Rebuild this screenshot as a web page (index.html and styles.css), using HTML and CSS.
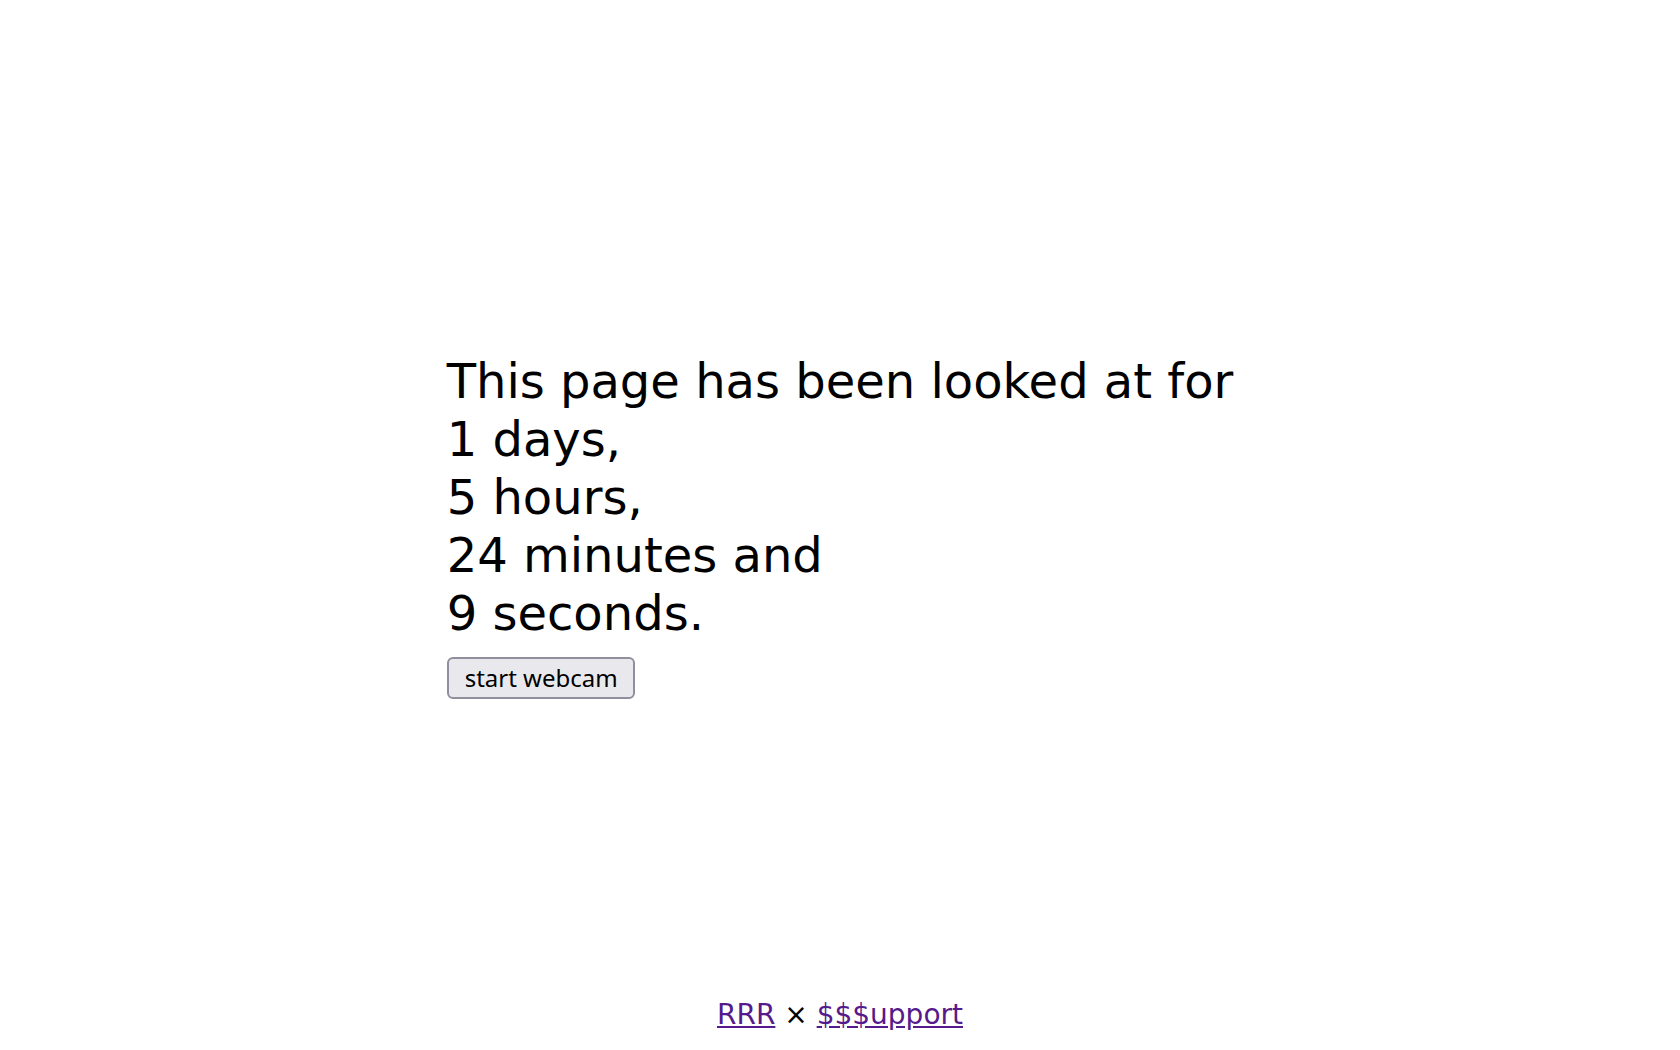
FILE: index.html
```html
<!DOCTYPE html>
<html lang="en">
<head>
<meta charset="utf-8">
<title>Looked at</title>
<link rel="stylesheet" href="styles.css">
</head>
<body>
<div class="page">
  <main class="main">
    <div class="counter">
      <div class="line">This page has been looked at for</div>
      <div class="line">1 days,</div>
      <div class="line">5 hours,</div>
      <div class="line">24 minutes and</div>
      <div class="line">9 seconds.</div>
    </div>
    <button class="cam-btn" type="button">start webcam</button>
  </main>
  <footer class="footer">
    <a href="#r" class="link">RRR</a> × <a href="#s" class="link">$$$upport</a>
  </footer>
</div>
</body>
</html>
```

FILE: styles.css
```css
html, body {
  margin: 0;
  padding: 0;
  background: #ffffff;
}
body {
  font-family: "DejaVu Sans", sans-serif;
  color: #000;
}
.page {
  height: 100vh;
  display: grid;
  grid-template-rows: 1fr auto 1fr;
  justify-items: center;
}
.page::before {
  content: "";
}
.main {
  display: flex;
  flex-direction: column;
  align-items: flex-start;
}
.counter {
  font-size: 48px;
  line-height: 58px;
}
.cam-btn {
  margin-top: 15px;
  font-family: "Noto Sans", "Open Sans", sans-serif;
  font-size: 24px;
  height: 42px;
  padding: 0 15px 0 16px;
  color: #000;
  background: #e9e9ed;
  border: 2px solid #8f8f9d;
  border-radius: 6px;
}
.footer {
  align-self: end;
  font-size: 28px;
  line-height: 32px;
  padding-bottom: 19px;
}
.link {
  color: #551a8b;
}
```
